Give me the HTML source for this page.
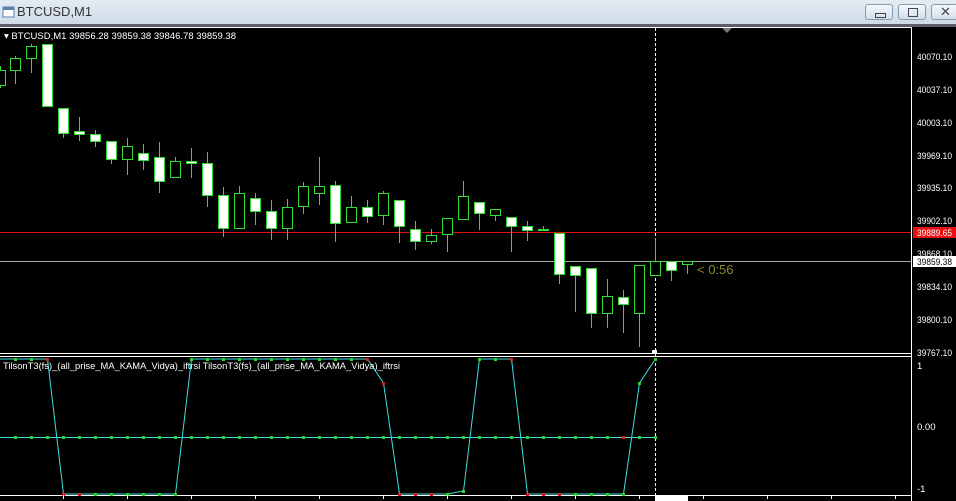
<!DOCTYPE html>
<html><head><meta charset="utf-8"><style>
html,body{margin:0;padding:0;width:956px;height:501px;overflow:hidden;background:#000;font-family:"Liberation Sans",sans-serif}
#tb{position:absolute;left:0;top:0;width:956px;height:24px;background:linear-gradient(#e3ebf3,#cfdbe7)}
#tb .t{position:absolute;left:17px;top:4px;font-size:13px;color:#333}
.btn{position:absolute;top:4px;width:28px;height:16px;border:1px solid #8a9bb0;border-radius:3px;background:linear-gradient(#f4f7fb,#d5dfea);box-sizing:border-box}
#band{position:absolute;left:0;top:24px;width:956px;height:3px;background:#5a5f66}
svg{position:absolute;left:0;top:0}
</style></head><body>
<div id="tb"><svg width="14" height="14" style="left:2px;top:5px"><rect x="1" y="2" width="11" height="10" fill="#fff" stroke="#5a7fb0"/><rect x="1" y="2" width="11" height="3" fill="#5a7fb0"/></svg><span class="t">BTCUSD,M1</span>
<div class="btn" style="left:865px"><div style="position:absolute;left:9px;top:8px;width:9px;height:3px;border:1px solid #445"></div></div>
<div class="btn" style="left:898px"><div style="position:absolute;left:9px;top:3px;width:8px;height:7px;border:1px solid #445"></div></div>
<div class="btn" style="left:931px;width:30px"><div style="position:absolute;left:8px;top:-1px;font-size:13px;color:#445">✕</div></div>
</div>
<div id="band"></div>
<svg id="s" width="956" height="501" style="top:0">
<line x1="0" y1="27.5" x2="912" y2="27.5" stroke="#fff"/>
<polygon points="722,28 732,28 727,33" fill="#777"/>
<line x1="0" y1="232.5" x2="912" y2="232.5" stroke="#e01010"/>
<line x1="0" y1="261.5" x2="912" y2="261.5" stroke="#aaa"/>
<line x1="911.5" y1="28" x2="911.5" y2="501" stroke="#fff"/>
<line x1="0" y1="353.5" x2="912" y2="353.5" stroke="#fff"/>
<line x1="0" y1="356.5" x2="912" y2="356.5" stroke="#fff"/>
<line x1="0" y1="495.5" x2="912" y2="495.5" stroke="#fff"/>
<line x1="655.5" y1="28" x2="655.5" y2="495" stroke="#fff" stroke-dasharray="3,2"/>
<rect x="652" y="350" width="5" height="3" fill="#fff"/>
<rect x="655" y="495" width="33" height="6" fill="#fff"/>
<g id="c"></g>
<g id="ind"></g>
<g font-size="9.5" fill="#fff" font-family="Liberation Sans,sans-serif">
<text x="4" y="39" textLength="232" lengthAdjust="spacingAndGlyphs">▾ BTCUSD,M1  39856.28 39859.38 39846.78 39859.38</text>
<text x="3" y="369" font-size="9" textLength="397" lengthAdjust="spacingAndGlyphs">TilsonT3(fs)_(all_prise_MA_KAMA_Vidya)_iftrsi  TilsonT3(fs)_(all_prise_MA_KAMA_Vidya)_iftrsi</text>
<g font-size="9.5">
<text x="917" y="60" textLength="35" lengthAdjust="spacingAndGlyphs">40070.10</text>
<text x="917" y="93" textLength="35" lengthAdjust="spacingAndGlyphs">40037.10</text>
<text x="917" y="126" textLength="35" lengthAdjust="spacingAndGlyphs">40003.10</text>
<text x="917" y="159" textLength="35" lengthAdjust="spacingAndGlyphs">39969.10</text>
<text x="917" y="191" textLength="35" lengthAdjust="spacingAndGlyphs">39935.10</text>
<text x="917" y="224" textLength="35" lengthAdjust="spacingAndGlyphs">39902.10</text>
<text x="917" y="257" textLength="35" lengthAdjust="spacingAndGlyphs">39868.10</text>
<text x="917" y="290" textLength="35" lengthAdjust="spacingAndGlyphs">39834.10</text>
<text x="917" y="323" textLength="35" lengthAdjust="spacingAndGlyphs">39800.10</text>
<text x="917" y="356" textLength="35" lengthAdjust="spacingAndGlyphs">39767.10</text>
<rect x="913" y="227" width="43" height="11" fill="#e81010"/>
<text x="917" y="236" fill="#fff" textLength="35" lengthAdjust="spacingAndGlyphs">39889.65</text>
<rect x="913" y="256" width="43" height="11" fill="#fff"/>
<text x="917" y="265" fill="#000" textLength="35" lengthAdjust="spacingAndGlyphs">39859.38</text>
</g>
<text x="917" y="369">1</text>
<text x="917" y="430">0.00</text>
<text x="917" y="492">-1</text>
<text x="697" y="274" font-size="13" fill="#8a8a2a">&lt; 0:56</text>
</g>
</svg>
<script>
var d=[[0,70,85,66,88,0],[15,58,70,56,84,0],[31,46,58,44,73,0],[47,44,106,44,106,1],[63,108,133,108,138,1],[79,131,134,117,141,1],[95,134,141,130,147,1],[111,141,159,141,164,1],[127,146,159,138,175,0],[143,153,160,144,170,1],[159,157,181,142,193,1],[175,161,177,157,177,0],[191,161,163,148,178,1],[207,163,195,152,207,1],[223,195,228,187,237,1],[239,193,228,186,228,0],[255,198,211,193,225,1],[271,211,228,200,240,1],[287,207,228,199,240,0],[303,186,206,182,214,0],[319,186,193,157,205,0],[335,185,223,181,242,1],[351,207,222,196,222,0],[367,207,216,200,223,1],[383,193,215,191,225,0],[399,200,226,200,243,1],[415,229,241,221,250,1],[431,235,241,229,244,0],[447,218,234,218,252,0],[463,196,219,181,219,0],[479,202,213,202,230,1],[495,209,215,209,221,0],[511,217,226,217,252,1],[527,226,230,221,241,1],[543,229,230,226,230,1],[559,233,274,233,284,1],[575,266,275,266,312,1],[591,268,313,268,328,1],[607,296,313,279,328,0],[623,297,304,290,333,1],[639,265,313,265,347,0],[655,261,275,238,275,0],[671,261,270,261,281,1],[687,261,264,261,274,0]];
var h='',G='#33dd33';
d.forEach(function(c){var x=c[0];h+='<line x1="'+(x+.5)+'" y1="'+c[3]+'" x2="'+(x+.5)+'" y2="'+c[4]+'" stroke="'+G+'"/>';
h+='<rect x="'+(x-4.5)+'" y="'+(c[1]+.5)+'" width="10" height="'+Math.max(1,c[2]-c[1])+'" fill="'+(c[5]?'#fff':'#000')+'" stroke="'+G+'"/>';});
document.getElementById('c').innerHTML=h;
var T=359,B=494,pts=[[-1,T],[15,T],[31,T],[47,T],[63,B],[79,B],[95,B],[111,B],[127,B],[143,B],[159,B],[175,B],[191,T],[207,T],[223,T],[239,T],[255,T],[271,T],[287,T],[303,T],[319,T],[335,T],[351,T],[367,T],[383,383],[399,B],[415,B],[431,B],[447,B],[463,491],[479,T],[495,T],[511,T],[527,B],[543,B],[559,B],[575,B],[591,B],[607,B],[623,B],[639,383],[655,T]];
var s='<line x1="0" y1="437.5" x2="655" y2="437.5" stroke="#40e0e0"/>';
s+='<polyline fill="none" stroke="#40e0e0" points="'+pts.map(function(p){return (p[0]+.5)+','+p[1]}).join(' ')+'"/>';
var red=[47,63,79,367,383,399,415,431,511,527,543,559];
pts.forEach(function(p,i){if(p[0]<0)return;var c=(red.indexOf(p[0])>=0)?'#d02020':'#30d030';s+='<rect x="'+(p[0]-1)+'" y="'+(p[1]-1)+'" width="3" height="3" fill="'+c+'"/>';
s+='<rect x="'+(p[0]-1)+'" y="436" width="3" height="3" fill="'+(p[0]==623?'#d02020':'#30d030')+'"/>';});
for(var x=63;x<912;x+=64)s+='<line x1="'+(x+.5)+'" y1="495" x2="'+(x+.5)+'" y2="499" stroke="#fff"/>';
document.getElementById('ind').innerHTML=s;
</script>
</body></html>
